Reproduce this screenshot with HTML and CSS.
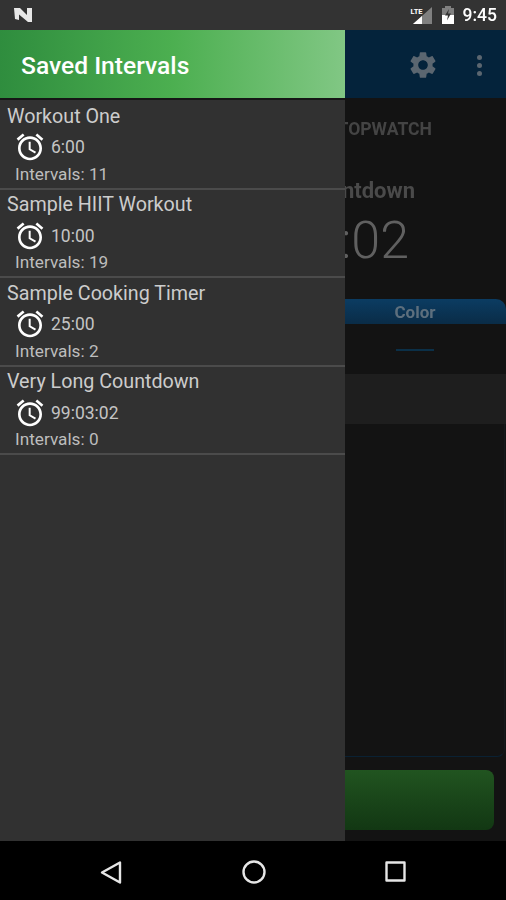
FILE: index.html
```html
<!DOCTYPE html>
<html>
  <head>
    <title>Saved Intervals</title>
    <link rel="stylesheet" href="styles.css">
  </head>
  <body>
    <div class="status-bar">
      <svg class="status-logo" width="20" height="18" viewBox="0 0 20 18">
        <path d="M1 2h6l7 7V2h5v14h-4L6 8.5V14l-4-1z" fill="#e8e8e8"/>
      </svg>
      <div class="status-right">
        <svg width="23" height="20" viewBox="0 0 23 20">
          <path d="M22 2v17H3z" fill="#808080"/>
          <path d="M12 11v8H3z" fill="#fff"/>
          <rect x="0" y="0" width="12" height="10" fill="#333"/>
          <text x="0.5" y="8.5" class="lte">LTE</text>
        </svg>
        <svg width="14" height="20" viewBox="0 0 14 20">
          <path d="M4 1h6v2h3v16H1V3h3z" fill="#808080"/>
          <path d="M1 10h12v9H1z" fill="#fff"/>
          <path d="M8 4L4 10.5h3l-1 5 4-7H7z" fill="#333"/>
        </svg>
        <span class="clock">9:45</span>
      </div>
    </div>

    <div class="screen">
      <div class="app">
        <div class="toolbar">
          <svg class="gear" width="32" height="32" viewBox="0 0 24 24" fill="#5b6670">
            <path d="M19.14 12.94c.04-.3.06-.61.06-.94 0-.32-.02-.64-.07-.94l2.03-1.58c.18-.14.23-.41.12-.61l-1.92-3.32c-.12-.22-.37-.29-.59-.22l-2.39.96c-.5-.38-1.03-.7-1.62-.94l-.36-2.54c-.04-.24-.24-.41-.48-.41h-3.84c-.24 0-.43.17-.47.41l-.36 2.54c-.59.24-1.13.57-1.62.94l-2.39-.96c-.22-.08-.47 0-.59.22L2.74 8.87c-.12.21-.08.47.12.61l2.03 1.58c-.05.3-.09.63-.09.94s.02.64.07.94l-2.03 1.58c-.18.14-.23.41-.12.61l1.92 3.32c.12.22.37.29.59.22l2.39-.96c.5.38 1.03.7 1.62.94l.36 2.54c.05.24.24.41.48.41h3.84c.24 0 .44-.17.47-.41l.36-2.54c.59-.24 1.13-.56 1.62-.94l2.39.96c.22.08.47 0 .59-.22l1.92-3.32c.12-.22.07-.47-.12-.61l-2.01-1.58zM12 15.6c-1.98 0-3.6-1.62-3.6-3.6s1.62-3.6 3.6-3.6 3.6 1.62 3.6 3.6-1.62 3.6-3.6 3.6z"/>
          </svg>
          <div class="dots">
            <span></span>
            <span></span>
            <span></span>
          </div>
        </div>
        <div class="tab-label">STOPWATCH</div>
        <div class="timer-name">Countdown</div>
        <div class="timer-value">99:03:02</div>
        <div class="color-bar">Color</div>
        <div class="color-line"></div>
        <div class="panel"></div>
        <div class="frame"></div>
        <div class="start-button"></div>
      </div>

      <div class="drawer">
        <div class="drawer-header">Saved Intervals</div>

        <div class="interval-list">
          <div class="interval">
            <div class="interval-name">Workout One</div>
            <div class="interval-time">
              <svg class="alarm" width="32" height="32" viewBox="0 0 24 24" fill="#fff">
                <path d="M22 5.72l-4.6-3.86-1.29 1.53 4.6 3.86L22 5.72zM7.88 3.39L6.6 1.86 2 5.71l1.29 1.53 4.59-3.85zM12.5 8H11v6l4.75 2.85.75-1.23-4-2.37V8zM12 4c-4.97 0-9 4.03-9 9s4.02 9 9 9c4.97 0 9-4.03 9-9s-4.03-9-9-9zm0 16c-3.87 0-7-3.13-7-7s3.13-7 7-7 7 3.13 7 7-3.13 7-7 7z"/>
              </svg>
              <span>6:00</span>
            </div>
            <div class="interval-count">Intervals: 11</div>
          </div>

          <div class="interval">
            <div class="interval-name">Sample HIIT Workout</div>
            <div class="interval-time">
              <svg class="alarm" width="32" height="32" viewBox="0 0 24 24" fill="#fff">
                <path d="M22 5.72l-4.6-3.86-1.29 1.53 4.6 3.86L22 5.72zM7.88 3.39L6.6 1.86 2 5.71l1.29 1.53 4.59-3.85zM12.5 8H11v6l4.75 2.85.75-1.23-4-2.37V8zM12 4c-4.97 0-9 4.03-9 9s4.02 9 9 9c4.97 0 9-4.03 9-9s-4.03-9-9-9zm0 16c-3.87 0-7-3.13-7-7s3.13-7 7-7 7 3.13 7 7-3.13 7-7 7z"/>
              </svg>
              <span>10:00</span>
            </div>
            <div class="interval-count">Intervals: 19</div>
          </div>

          <div class="interval">
            <div class="interval-name">Sample Cooking Timer</div>
            <div class="interval-time">
              <svg class="alarm" width="32" height="32" viewBox="0 0 24 24" fill="#fff">
                <path d="M22 5.72l-4.6-3.86-1.29 1.53 4.6 3.86L22 5.72zM7.88 3.39L6.6 1.86 2 5.71l1.29 1.53 4.59-3.85zM12.5 8H11v6l4.75 2.85.75-1.23-4-2.37V8zM12 4c-4.97 0-9 4.03-9 9s4.02 9 9 9c4.97 0 9-4.03 9-9s-4.03-9-9-9zm0 16c-3.87 0-7-3.13-7-7s3.13-7 7-7 7 3.13 7 7-3.13 7-7 7z"/>
              </svg>
              <span>25:00</span>
            </div>
            <div class="interval-count">Intervals: 2</div>
          </div>

          <div class="interval">
            <div class="interval-name">Very Long Countdown</div>
            <div class="interval-time">
              <svg class="alarm" width="32" height="32" viewBox="0 0 24 24" fill="#fff">
                <path d="M22 5.72l-4.6-3.86-1.29 1.53 4.6 3.86L22 5.72zM7.88 3.39L6.6 1.86 2 5.71l1.29 1.53 4.59-3.85zM12.5 8H11v6l4.75 2.85.75-1.23-4-2.37V8zM12 4c-4.97 0-9 4.03-9 9s4.02 9 9 9c4.97 0 9-4.03 9-9s-4.03-9-9-9zm0 16c-3.87 0-7-3.13-7-7s3.13-7 7-7 7 3.13 7 7-3.13 7-7 7z"/>
              </svg>
              <span>99:03:02</span>
            </div>
            <div class="interval-count">Intervals: 0</div>
          </div>
        </div>
      </div>
    </div>

    <div class="nav-bar">
      <svg width="24" height="24" viewBox="0 0 24 24" fill="none" stroke="#e6e6e6" stroke-width="2.4" stroke-linejoin="round">
        <path d="M21 2.5v20L3 12.5z"/>
      </svg>
      <svg width="26" height="26" viewBox="0 0 26 26" fill="none" stroke="#e6e6e6" stroke-width="2.4">
        <circle cx="13" cy="13" r="10.5"/>
      </svg>
      <svg width="22" height="22" viewBox="0 0 22 22" fill="none" stroke="#e6e6e6" stroke-width="2.4" stroke-linejoin="round">
        <rect x="1.5" y="1.5" width="18" height="18"/>
      </svg>
    </div>
  </body>
</html>
```

FILE: styles.css
```css
* {
  margin: 0;
  padding: 0;
  box-sizing: border-box;
}

body {
  width: 506px;
  height: 900px;
  overflow: hidden;
  display: flex;
  flex-direction: column;
  font-family: Roboto, "Liberation Sans", sans-serif;
  background-color: #000;
  filter: blur(0.35px); /* reference is a soft, rescaled capture */
}

.status-bar {
  height: 30px;
  padding: 0 9px 0 13px;
  display: flex;
  justify-content: space-between;
  align-items: center;
  background-color: #333;
}
.status-right {
  display: flex;
  align-items: center;
  gap: 8px;
}
.lte {
  font-size: 7.5px;
  font-weight: 700;
  fill: #fff;
}
.clock {
  font-size: 17.5px;
  font-weight: 500;
  color: #fff;
}

.screen {
  position: relative;
  height: 811px;
  overflow: hidden;
}

/* dimmed app behind the drawer */
.app {
  height: 100%;
  display: flex;
  flex-direction: column;
  background-color: #131313;
}
.toolbar {
  height: 68px;
  padding: 2px 24px 0 0;
  display: flex;
  justify-content: flex-end;
  align-items: center;
  gap: 38px;
  background-color: #04233b;
}
.dots {
  display: flex;
  flex-direction: column;
  gap: 3px;
}
.dots span {
  width: 5px;
  height: 5px;
  border-radius: 50%;
  background-color: #5b6670;
}
.tab-label {
  margin-top: 22px;
  padding-right: 74px;
  text-align: right;
  font-size: 17.6px;
  line-height: 19px;
  font-weight: 700;
  color: #444;
}
.timer-name {
  margin-top: 39px;
  padding-right: 91px;
  text-align: right;
  font-size: 22px;
  line-height: 26px;
  font-weight: 700;
  color: #4a4a4a;
}
.timer-value {
  margin-top: 9px;
  padding-right: 97px;
  text-align: right;
  font-size: 52px;
  line-height: 56px;
  font-weight: 300;
  color: #606060;
}
.color-bar {
  height: 25px;
  margin-top: 30px;
  margin-left: 324px;
  border-radius: 0 10px 0 0;
  background: linear-gradient(#0b3c62, #0a2c47);
  text-align: center;
  font-size: 17px;
  line-height: 27px;
  font-weight: 700;
  color: #5d6f7d;
}
.color-line {
  width: 38px;
  height: 2px;
  margin-top: 25px;
  margin-left: 396px;
  background-color: #0b3048;
}
.panel {
  height: 50px;
  margin-top: 23px;
  background-color: #1e1e1e;
}
.frame {
  height: 333px;
  margin-right: 1px;
  border-bottom: 1px solid #0a2133;
  border-right: 1px solid #16191c;
  border-radius: 0 0 8px 0;
}
.start-button {
  height: 60px;
  margin-top: 13px;
  margin-right: 12px;
  border-radius: 8px;
  background: linear-gradient(#215420, #123713);
}

.drawer {
  position: absolute;
  top: 0;
  left: 0;
  bottom: 0;
  width: 345px;
  background-color: #313131;
}
.drawer-header {
  height: 70px;
  padding: 2px 0 0 21px;
  display: flex;
  align-items: center;
  border-bottom: 2px solid #161616;
  background: linear-gradient(90deg, #2f8d3e, #4caf50 50%, #81c784);
  font-size: 24.6px;
  font-weight: 500;
  color: #fff;
}
.interval-list {
  padding-top: 1px;
}
.interval {
  height: 88.6px;
  padding: 2.6px 0 0 7px;
  border-bottom: 2px solid #4b4b4b;
}
.interval-name {
  font-size: 19.7px;
  line-height: 25px;
  color: #ccc;
}
.interval-time {
  height: 31px;
  margin-top: 3px;
  padding-left: 7px;
  display: flex;
  align-items: center;
  gap: 5px;
  font-size: 17.5px;
  color: #c4c4c4;
}
.interval-count {
  margin-top: 1px;
  padding-left: 8px;
  font-size: 17.2px;
  line-height: 20px;
  color: #bdbdbd;
}

.nav-bar {
  flex: 1;
  padding: 2px 99px 0;
  display: flex;
  justify-content: space-between;
  align-items: center;
  background-color: #000;
}
```
